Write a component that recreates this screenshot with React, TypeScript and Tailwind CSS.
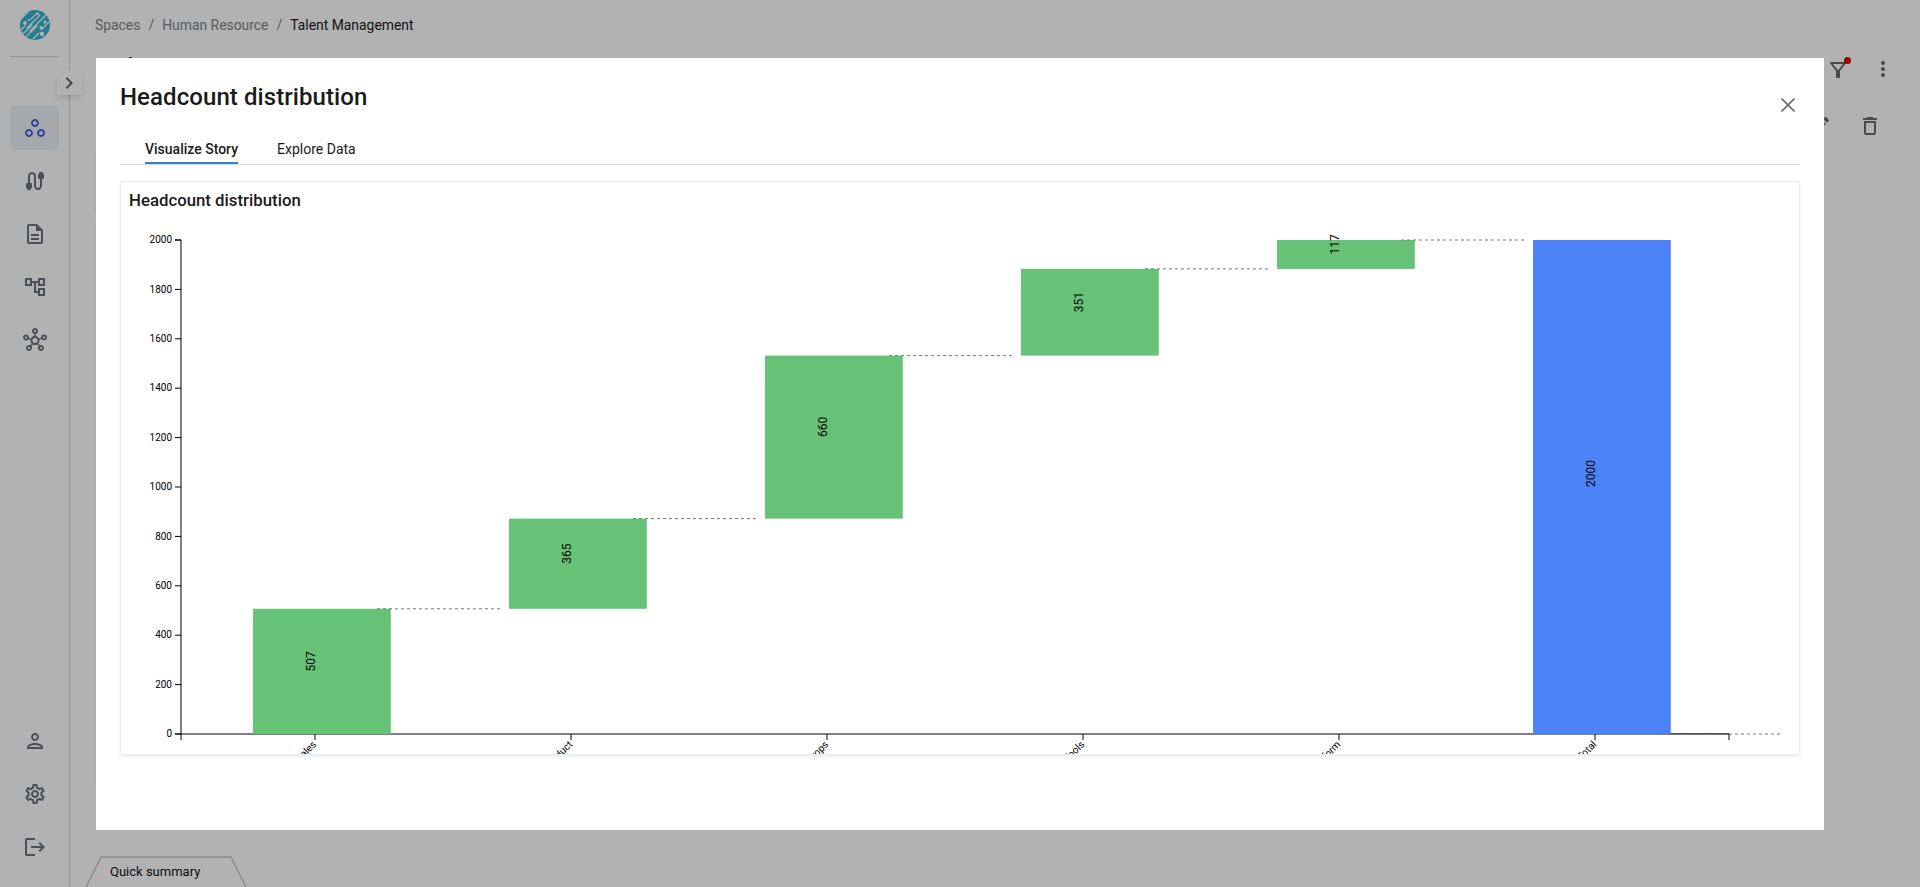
import React from 'react';
import {
    MdCable,
    MdChevronRight,
    MdLogout,
    MdMoreVert,
    MdOutlineAccountTree,
    MdOutlineDelete,
    MdOutlineDescription,
    MdOutlineEdit,
    MdOutlineFilterAlt,
    MdOutlineHub,
    MdOutlinePerson,
    MdOutlineSettings,
    MdOutlineWorkspaces,
} from 'react-icons/md';

const topNav = [
    { label: 'Spaces', Icon: MdOutlineWorkspaces, active: true },
    { label: 'Connections', Icon: MdCable },
    { label: 'Documents', Icon: MdOutlineDescription },
    { label: 'Models', Icon: MdOutlineAccountTree },
    { label: 'Hub', Icon: MdOutlineHub },
];

const bottomNav = [
    { label: 'Profile', Icon: MdOutlinePerson },
    { label: 'Settings', Icon: MdOutlineSettings },
    { label: 'Log out', Icon: MdLogout },
];

const steps = [
    { name: 'Sales', value: 507 },
    { name: 'Product', value: 365 },
    { name: 'Devops', value: 660 },
    { name: 'Tools', value: 351 },
    { name: 'Platform', value: 117 },
];

const TOTAL = 2000;
const LEFT = 60;
const RIGHT = 1608;
const TOP = 24;
const BOTTOM = 518;
const STEP = 256;
const BAR_WIDTH = 137.8;

const y = (value: number) => BOTTOM - (value / TOTAL) * (BOTTOM - TOP);

function WaterfallChart() {
    let sum = 0;
    const bars = steps.map((s) => {
        const start = sum;
        sum += s.value;
        return { ...s, start, end: sum, level: sum, fill: '#66c277' };
    });
    bars.push({ name: 'Total', value: TOTAL, start: 0, end: TOTAL, level: 0, fill: '#4e83f7' });
    const ticks = Array.from({ length: 11 }, (_, i) => i * 200);

    return (
        <svg width="1678" height="538" className="block overflow-hidden">
            <g fill="none" stroke="#000">
                <path d={`M${LEFT - 6},${TOP}H${LEFT}V${BOTTOM}H${LEFT - 6}`} />
                <path d={`M${LEFT},${BOTTOM + 6}V${BOTTOM}H${RIGHT}V${BOTTOM + 6}`} />
            </g>
            {ticks.map((t) => (
                <g key={t}>
                    <line x1={LEFT - 6} x2={LEFT} y1={y(t)} y2={y(t)} stroke="#000" />
                    <text x={LEFT - 9} y={y(t)} dy="0.32em" textAnchor="end" fontSize="10">{t}</text>
                </g>
            ))}
            {bars.map((b, i) => {
                const tickX = 194 + i * STEP;
                return (
                    <g key={b.name}>
                        <line x1={tickX} x2={tickX} y1={BOTTOM} y2={BOTTOM + 6} stroke="#000" />
                        <text transform={`translate(${tickX - 3},${BOTTOM + 6}) rotate(-45)`} x="0" y="0" dy="0.71em" textAnchor="end" fontSize="10">
                            {b.name}
                        </text>
                        <rect x={132 + i * STEP} y={y(b.end)} width={BAR_WIDTH} height={y(b.start) - y(b.end)} fill={b.fill} />
                        <text transform={`translate(${tickX},${(y(b.start) + y(b.end)) / 2}) rotate(-90)`} fontSize="12">
                            {b.value}
                        </text>
                        <line x1={tickX + 62} x2={tickX + 186} y1={y(b.level)} y2={y(b.level)} stroke="#777" strokeDasharray="3" />
                    </g>
                );
            })}
            <path d={`M1550,${BOTTOM - 0.5}H${RIGHT}`} stroke="#000" strokeOpacity="0.4" />
        </svg>
    );
}

function Logo() {
    return (
        <svg width="30" height="30" viewBox="0 0 30 30">
            <defs>
                <clipPath id="disc"><circle cx="15" cy="15" r="15" /></clipPath>
            </defs>
            <g clipPath="url(#disc)">
                <rect width="30" height="30" fill="#35b5cc" />
                <path
                    d="M1 9L9 1M11 9L17 3M7 18L20 5M2 25L12 15M10 21L27 4M6 27L17 16M13 29L19 23M21 20L30 11M24 29L29 22M1 20L5 16"
                    stroke="#fff" strokeWidth="1.1" strokeLinecap="round"
                />
                <g fill="#fff">
                    <circle cx="5" cy="13" r="1.9" />
                    <circle cx="18" cy="4" r="1.2" />
                    <circle cx="21" cy="17.5" r="1.6" />
                    <circle cx="22" cy="24" r="2.2" />
                    <circle cx="25" cy="12" r="1.5" />
                    <circle cx="9" cy="10" r="1" />
                </g>
            </g>
        </svg>
    );
}

function NavItem({ label, Icon, active }: { label: string; Icon: React.ElementType; active?: boolean }) {
    return (
        <button
            aria-label={label}
            className={`w-[49px] h-[45px] rounded-md flex items-center justify-center ${active ? 'bg-[#edf1f8] text-[#4a5fd9]' : 'text-[#6b7280]'}`}
        >
            <Icon className="w-6 h-6" />
        </button>
    );
}

function Sidebar() {
    return (
        <aside className="relative w-[70px] shrink-0 h-full border-r border-[#d2d2d2] flex flex-col items-center pt-[10px] pb-[18px]">
            <Logo />
            <div className="w-[49px] h-px bg-[#d5d5d5] mt-4" />
            <button aria-label="Expand" className="absolute left-[57px] top-[70px] w-[25px] h-[25px] pr-0.5 bg-white shadow-md rounded-xs flex items-center justify-center text-[#666]">
                <MdChevronRight className="w-6 h-6 shrink-0" />
            </button>
            <nav className="mt-12 flex flex-col gap-2">
                {topNav.map((item) => <NavItem key={item.label} {...item} />)}
            </nav>
            <nav className="mt-auto flex flex-col gap-2">
                {bottomNav.map((item) => <NavItem key={item.label} {...item} />)}
            </nav>
        </aside>
    );
}

function Page() {
    return (
        <main className="flex-1 flex flex-col">
            <div className="h-[50px] pl-[25px] flex items-center gap-2 text-[13.9px] text-[#80858a]">
                <span>Spaces</span>
                <span>/</span>
                <span>Human Resource</span>
                <span>/</span>
                <span className="text-[#1a1a1a]">Talent Management</span>
            </div>
            <div className="h-[38px] pl-[58px] pr-[25px] flex items-center justify-end gap-[21px] text-[#6b6b6b]">
                <span className="w-[5px] h-2 mr-auto self-start mt-[7px] rounded-t-full bg-[#222]" />
                <div className="relative">
                    <MdOutlineFilterAlt className="w-6 h-6 mt-0.5" />
                    <span className="absolute top-[1px] -right-px w-[7px] h-[7px] rounded-full bg-[#e00000]" />
                </div>
                <MdMoreVert className="w-6 h-6" />
            </div>
            <div className="h-[52px] mt-3 pr-[38px] flex items-center justify-end gap-[26px] text-[#6b6b6b]">
                <MdOutlineEdit className="w-6 h-6" />
                <MdOutlineDelete className="w-6 h-6" />
            </div>
            <div className="mx-[26px] mr-[110px] h-[60px] shadow" />
            <div className="mx-[26px] mr-[110px] mt-3 h-[560px] shadow" />
            <div className="mt-auto flex">
                <div className="relative ml-[16px] w-[161px] h-[30px] pl-6 flex items-center text-[13px] text-[#111]">
                    <svg className="absolute inset-0 overflow-visible" width="161" height="30" fill="none">
                        <path d="M0 30L15 0H145L160 30" stroke="#c9c9c9" strokeWidth="1.5" />
                    </svg>
                    Quick summary
                </div>
            </div>
        </main>
    );
}

function StoryDialog() {
    return (
        <div className="w-[1728px] h-[772px] bg-white px-6 pt-[23px] mt-[1px]">
            <div className="h-[61px] flex justify-between">
                <h2 className="text-2xl font-medium text-[#1a1a1a] tracking-[0.08px]">Headcount distribution</h2>
                <button aria-label="Close" className="w-6 h-6 mt-3 flex items-center justify-center text-[#6e6e6e]">
                    <svg width="14" height="14" viewBox="0 0 14 14" stroke="currentColor" strokeWidth="1.7">
                        <path d="M0.5 0.5L13.5 13.5M13.5 0.5L0.5 13.5" />
                    </svg>
                </button>
            </div>
            <div className="h-[23px] border-b border-[#dcdcdc] pl-[25px] flex gap-[39px] text-sm text-[#1a1a1a]">
                <button className="h-[22px] border-b-2 border-[#3182ce] font-medium flex items-start leading-[15px]">Visualize Story</button>
                <button className="h-[22px] flex items-start leading-[15px]">Explore Data</button>
            </div>
            <div className="mt-4 h-[573px] border border-[#e9eef0] border-b-0 shadow-[0_3px_4px_-1px_rgba(0,40,50,0.12)]">
                <h3 className="h-[34px] pl-2 pt-[3px] flex items-center text-[16.8px] font-medium text-[#1a1a1a]">Headcount distribution</h3>
                <WaterfallChart />
            </div>
        </div>
    );
}

export default function App() {
    return (
        <div className="w-full h-[887px] flex bg-white overflow-hidden font-[Roboto,sans-serif]">
            <Sidebar />
            <Page />
            <div className="fixed inset-0 bg-black/30 flex items-center justify-center">
                <StoryDialog />
            </div>
        </div>
    );
}
